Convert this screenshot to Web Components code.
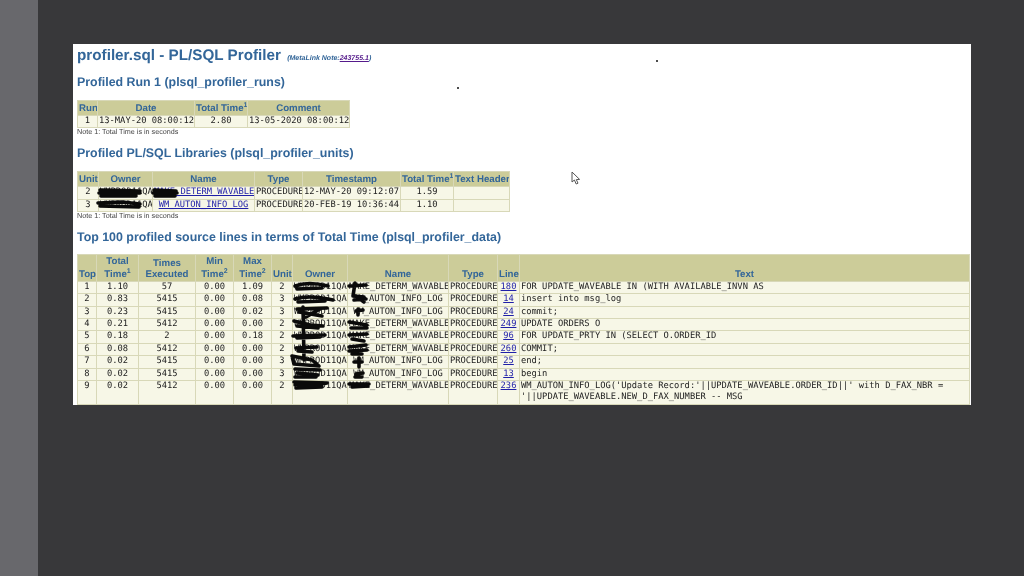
<!DOCTYPE html>
<html>
<head>
<meta charset="utf-8">
<title>profiler.sql</title>
<style>
  html, body { margin: 0; height: 100%; background: #38383a; overflow: hidden; }
</style>
</head>
<body>
<profiler-screen>
  <profiler-sheet>
    <report-heading level="1" top="1">profiler.sql - PL/SQL Profiler <small style="font-size:7px;font-style:italic;line-height:0;margin-left:2px">(MetaLink Note:<a href="#">243755.1</a>)</small></report-heading>
    <report-heading top="8" bottom="9.5">Profiled Run 1 (plsql_profiler_runs)</report-heading>
    <report-table name="runs"></report-table>
    <report-note>Note 1: Total Time is in seconds</report-note>
    <report-heading top="9" bottom="10.5">Profiled PL/SQL Libraries (plsql_profiler_units)</report-heading>
    <report-table name="units"></report-table>
    <report-note>Note 1: Total Time is in seconds</report-note>
    <report-heading top="9" bottom="8.5">Top 100 profiled source lines in terms of Total Time (plsql_profiler_data)</report-heading>
    <report-table name="lines"></report-table>
  </profiler-sheet>
</profiler-screen>

<script>
const TABLES = {
  runs: {
    cols: [20, 97, 53, 102],
    headHeight: 15,
    head: ['Run', 'Date', 'Total Time<sup>1</sup>', 'Comment'],
    align: ['c', 'c', 'c', 'c'],
    rows: [['1', '13-MAY-20 08:00:12', '2.80', '13-05-2020 08:00:12']]
  },
  units: {
    cols: [21, 54, 102, 48, 98, 53, 56],
    headHeight: 15,
    head: ['Unit', 'Owner', 'Name', 'Type', 'Timestamp', 'Total Time<sup>1</sup>', 'Text Header'],
    align: ['c', 'c', 'c', 'c', 'c', 'c', 'l'],
    rows: [
      ['2', 'WMPROD11QA', '<a href="#">MAKE_DETERM_WAVABLE</a>', 'PROCEDURE', '12-MAY-20 09:12:07', '1.59', ''],
      ['3', 'WMPROD11QA', '<a href="#">WM_AUTON_INFO_LOG</a>', 'PROCEDURE', '20-FEB-19 10:36:44', '1.10', '']
    ],
    marks: {
      box: '77 171 433 40',
      d: 'M100 190 L140 191 M99 193 L140 193 M101 196 L136 196 M98 203 L122 202 L140 204 M100 206 L139 207 M154 190 L176 191 M153 193 L177 193 M155 196 L175 196'
    }
  },
  lines: {
    cols: [19, 42, 57, 38, 38, 21, 55, 101, 49, 22, 450],
    headHeight: 27,
    head: ['Top', 'Total<br>Time<sup>1</sup>', 'Times<br>Executed', 'Min<br>Time<sup>2</sup>', 'Max<br>Time<sup>2</sup>', 'Unit', 'Owner', 'Name', 'Type', 'Line', 'Text'],
    align: ['c', 'c', 'c', 'c', 'c', 'c', 'c', 'c', 'c', 'c', 'l'],
    rows: [
      ['1', '1.10', '57', '0.00', '1.09', '2', 'WMPROD11QA', 'MAKE_DETERM_WAVABLE', 'PROCEDURE', '<a href="#">180</a>', 'FOR UPDATE_WAVEABLE IN (WITH AVAILABLE_INVN AS'],
      ['2', '0.83', '5415', '0.00', '0.08', '3', 'WMPROD11QA', 'WM_AUTON_INFO_LOG', 'PROCEDURE', '<a href="#">14</a>', 'insert into msg_log'],
      ['3', '0.23', '5415', '0.00', '0.02', '3', 'WMPROD11QA', 'WM_AUTON_INFO_LOG', 'PROCEDURE', '<a href="#">24</a>', 'commit;'],
      ['4', '0.21', '5412', '0.00', '0.00', '2', 'WMPROD11QA', 'MAKE_DETERM_WAVABLE', 'PROCEDURE', '<a href="#">249</a>', 'UPDATE ORDERS O'],
      ['5', '0.18', '2', '0.00', '0.18', '2', 'WMPROD11QA', 'MAKE_DETERM_WAVABLE', 'PROCEDURE', '<a href="#">96</a>', 'FOR UPDATE_PRTY IN (SELECT O.ORDER_ID'],
      ['6', '0.08', '5412', '0.00', '0.00', '2', 'WMPROD11QA', 'MAKE_DETERM_WAVABLE', 'PROCEDURE', '<a href="#">260</a>', 'COMMIT;'],
      ['7', '0.02', '5415', '0.00', '0.00', '3', 'WMPROD11QA', 'WM_AUTON_INFO_LOG', 'PROCEDURE', '<a href="#">25</a>', 'end;'],
      ['8', '0.02', '5415', '0.00', '0.00', '3', 'WMPROD11QA', 'WM_AUTON_INFO_LOG', 'PROCEDURE', '<a href="#">13</a>', 'begin'],
      ['9', '0.02', '5412', '0.00', '0.00', '2', 'WMPROD11QA', 'MAKE_DETERM_WAVABLE', 'PROCEDURE', '<a href="#">236</a>', "WM_AUTON_INFO_LOG('Update Record:'||UPDATE_WAVEABLE.ORDER_ID||' with D_FAX_NBR = '||UPDATE_WAVEABLE.NEW_D_FAX_NUMBER -- MSG"]
    ],
    marks: {
      box: '77 254 893 150',
      d: 'M295 286 C303 283 316 283 328 286 M297 289 L322 288 M295 299 C305 296 320 297 333 300 M298 302 L325 301 M297 309 L327 308 M299 312 L322 316 M320 309 L306 317 M294 321 L310 325 L323 326 M297 326 L318 328 M293 336 L325 335 M297 338 L320 337 M296 348 L317 347 M298 351 L312 352 M303 307 L304 360 M292 356 L312 360 L319 366 L294 364 L292 356 M295 369 L320 370 M297 373 L318 375 M295 377 L316 377 M294 382 L327 383 L296 388 L322 387 L295 385 M349 286 L366 285 M355 283 L353 296 L364 297 M354 300 L366 299 M356 296 L364 302 M356 311 L363 310 M358 309 L358 315 M349 322 L367 325 M351 328 L367 328 M349 335 L367 334 M352 339 L364 341 M349 347 L366 345 M349 351 L367 350 M352 354 L362 354 M354 362 L362 362 M359 358 L359 367 M356 374 L363 373 M355 377 L362 377 M349 384 L369 384 M352 387 L368 386'
    }
  }
};

class ProfilerScreen extends HTMLElement {
  connectedCallback() {
    this.attachShadow({ mode: 'open' });
    this.shadowRoot.innerHTML = `
      <style>
        :host { display: flex; height: 100vh; background: #38383a; }
        .rail { flex: 0 0 38px; background: #68686c; }
        .stage { flex: 1; padding: 44px 53px 0 35px; position: relative; }
        .speck { position: absolute; background: #111; border-radius: 50%; width: 2px; height: 2px; }
        .pointer { position: absolute; left: 533px; top: 171px; }
      </style>
      <div class="rail"></div>
      <div class="stage">
        <slot></slot>
        <span class="speck" style="left:618px;top:60px"></span>
        <span class="speck" style="left:419px;top:87px"></span>
        <svg class="pointer" width="11" height="15" viewBox="0 0 11 15">
          <path d="M1 1 L1 11 L3.4 9 L5.2 13 L7 12.2 L5.3 8.6 L8.6 8.4 Z" fill="#fff" stroke="#555" stroke-width="1"/>
        </svg>
      </div>
    `;
  }
}

class ProfilerSheet extends HTMLElement {
  connectedCallback() {
    this.attachShadow({ mode: 'open' });
    this.shadowRoot.innerHTML = `
      <style>
        :host {
          display: block;
          box-sizing: border-box;
          width: 898px;
          height: 361px;
          padding: 0 0 0 4px;
          background: #fff;
          filter: blur(.4px);
          text-rendering: geometricPrecision;
          font-family: "Liberation Sans", Arial, sans-serif;
        }
      </style>
      <slot></slot>
    `;
  }
}

class ReportHeading extends HTMLElement {
  connectedCallback() {
    const big = this.getAttribute('level') === '1';
    this.attachShadow({ mode: 'open' });
    this.shadowRoot.innerHTML = `
      <style>
        :host {
          display: block;
          font: bold ${big ? 15.25 : 12.4}px/${big ? 21 : 16}px "Liberation Sans", Arial, sans-serif;
          color: #336699;
          padding-top: ${this.getAttribute('top') || 0}px;
          padding-bottom: ${this.getAttribute('bottom') || 0}px;
          white-space: nowrap;
        }
      </style>
      <slot></slot>
    `;
    const link = this.querySelector('a');
    if (link) link.style.color = '#551a8b';
  }
}

class ReportNote extends HTMLElement {
  connectedCallback() {
    this.attachShadow({ mode: 'open' });
    this.shadowRoot.innerHTML = `
      <style>
        :host {
          display: block;
          font: 7.2px/8px "Liberation Sans", Arial, sans-serif;
          color: #444;
        }
      </style>
      <slot></slot>
    `;
  }
}

class ReportTable extends HTMLElement {
  connectedCallback() {
    const t = TABLES[this.getAttribute('name')];
    const width = t.cols.reduce((a, b) => a + b, 0);
    const colgroup = t.cols.map(c => `<col style="width:${c}px">`).join('');
    const head = t.head.map(h => `<th>${h}</th>`).join('');
    const rows = t.rows.map(r =>
      '<tr>' + r.map((v, i) => `<td class="${t.align[i]}">${v}</td>`).join('') + '</tr>'
    ).join('');
    const marks = t.marks
      ? `<svg viewBox="${t.marks.box}" width="${t.marks.box.split(' ')[2]}" height="${t.marks.box.split(' ')[3]}">
           <path d="${t.marks.d}" fill="none" stroke="#0a0a0a" stroke-width="3.6" stroke-linecap="round" stroke-linejoin="round"/>
         </svg>`
      : '';
    this.attachShadow({ mode: 'open' });
    this.shadowRoot.innerHTML = `
      <style>
        :host { display: block; position: relative; width: ${width}px; }
        table { border-collapse: collapse; table-layout: fixed; width: ${width}px; }
        th, td { border: 1px solid #d8d8b8; padding: 0 1px; overflow: hidden; }
        tr.head { height: ${t.headHeight}px; }
        th {
          background: #cccc99;
          color: #336699;
          font: bold 9.7px/11px "Liberation Sans", Arial, sans-serif;
          vertical-align: bottom;
          text-align: center;
          white-space: nowrap;
          padding-bottom: 1px;
        }
        sup { font-size: 7px; line-height: 9px; vertical-align: 4px; }
        td {
          background: #f7f7e7;
          color: #222;
          font: 8.77px/11.4px "DejaVu Sans Mono", "Liberation Mono", monospace;
          vertical-align: top;
          white-space: nowrap;
        }
        td.l { white-space: normal; text-align: left; }
        td.c { text-align: center; }
        a { color: #1f1fa8; }
        svg { position: absolute; left: 0; top: 0; pointer-events: none; }
      </style>
      <table><colgroup>${colgroup}</colgroup><tr class="head">${head}</tr>${rows}</table>
      ${marks}
    `;
  }
}

customElements.define('profiler-screen', ProfilerScreen);
customElements.define('profiler-sheet', ProfilerSheet);
customElements.define('report-heading', ReportHeading);
customElements.define('report-note', ReportNote);
customElements.define('report-table', ReportTable);
</script>
</body>
</html>
